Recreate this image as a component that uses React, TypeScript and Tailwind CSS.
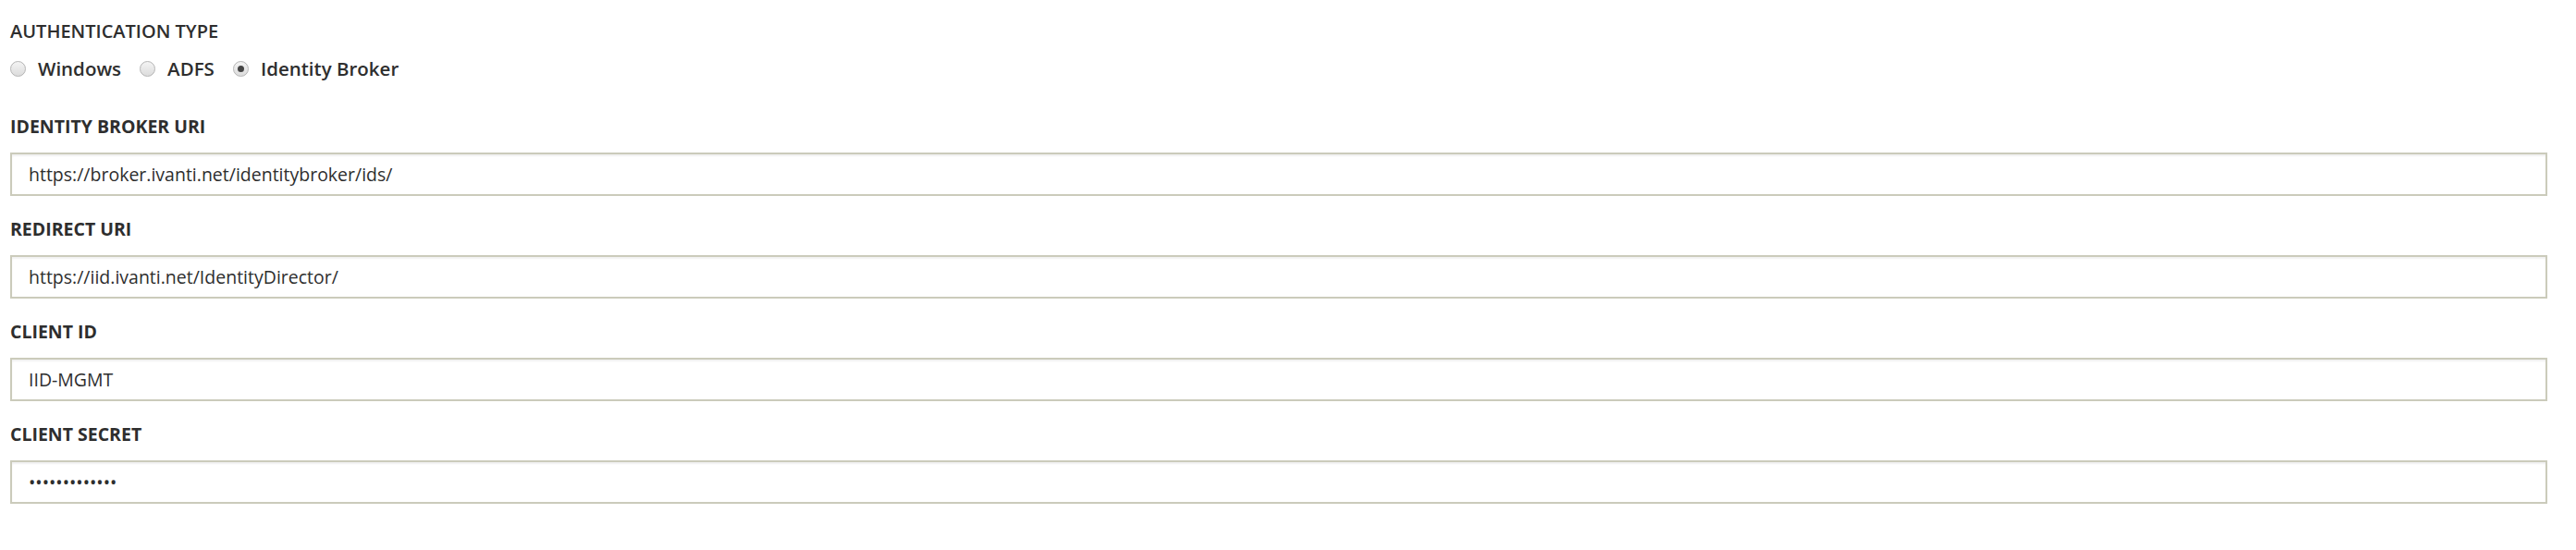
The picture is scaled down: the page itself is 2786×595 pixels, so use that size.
import { useState } from 'react'

type AuthType = 'windows' | 'adfs' | 'broker'

const authOptions: { value: AuthType; label: string }[] = [
  { value: 'windows', label: 'Windows' },
  { value: 'adfs', label: 'ADFS' },
  { value: 'broker', label: 'Identity Broker' },
]

const fields = [
  { label: 'IDENTITY BROKER URI', value: 'https://broker.ivanti.net/identitybroker/ids/' },
  { label: 'REDIRECT URI', value: 'https://iid.ivanti.net/IdentityDirector/' },
  { label: 'CLIENT ID', value: 'IID-MGMT' },
  { label: 'CLIENT SECRET', value: '•••••••••••••' },
]

function Radio({ checked }: { checked: boolean }) {
  return (
    <span className="flex h-[17px] w-[17px] items-center justify-center rounded-full border border-[#b4b4b4] bg-gradient-to-b from-[#f4f4f4] to-[#dcdcdc]">
      {checked && <span className="h-[7px] w-[7px] rounded-full bg-[#444]" />}
    </span>
  )
}

export default function App() {
  const [auth, setAuth] = useState<AuthType>('broker')

  return (
    <div className="min-h-[595px] bg-white pl-[11px] pr-[31px] pt-[20px] font-['Open_Sans',sans-serif] text-[#2e2e2e]">
      <h2 className="text-[20px] font-semibold leading-[28px]">AUTHENTICATION TYPE</h2>
      <div className="mt-[12px] flex items-center">
        {authOptions.map((o) => (
          <label
            key={o.value}
            className="mr-[20px] flex cursor-pointer items-center gap-[13px] text-[20.5px] font-semibold leading-[28px]"
            onClick={() => setAuth(o.value)}
          >
            <Radio checked={auth === o.value} />
            <span>{o.label}</span>
          </label>
        ))}
      </div>

      <div className="mt-[36px] flex flex-col gap-[23px]">
        {fields.map((f) => (
          <div key={f.label}>
            <div className="text-[19.5px] font-bold leading-[26px]">{f.label}</div>
            <div className="mt-[15px] flex h-[47px] items-center border-2 border-[#cbcbbb] bg-white pl-[18px] shadow-[inset_0_2px_2px_rgba(0,0,0,0.06)]">
              <span className="text-[19.5px] leading-[26px]">{f.value}</span>
            </div>
          </div>
        ))}
      </div>
    </div>
  )
}
